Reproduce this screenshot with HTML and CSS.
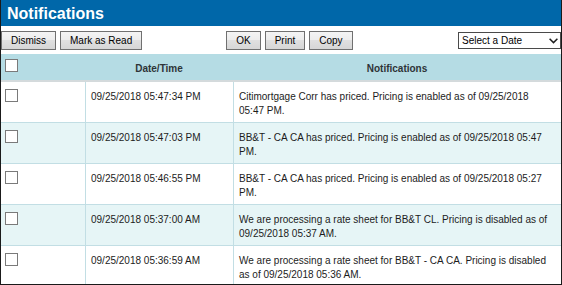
FILE: index.html
```html
<!DOCTYPE html>
<html>
    <head>
        <title>Notifications</title>
        <meta http-equiv="Content-Type" content="text/html; charset=UTF-8">
        <link rel="stylesheet" href="styles.css">
    </head>
    <body>
        <div class="panel">
            <div class="panel-title">Notifications</div>

            <div class="toolbar">
                <div class="btn-group">
                    <button class="btn">Dismiss</button>
                    <button class="btn">Mark as Read</button>
                </div>
                <div class="btn-group actions">
                    <button class="btn">OK</button>
                    <button class="btn">Print</button>
                    <button class="btn">Copy</button>
                </div>
                <div class="date-select">
                    <select>
                        <option>Select a Date</option>
                    </select>
                    <svg class="chevron" width="9" height="6" viewBox="0 0 9 6">
                        <path d="M0.6 0.8 L4.5 4.6 L8.4 0.8" fill="none" stroke="#1e1e1e" stroke-width="1.5"/>
                    </svg>
                </div>
            </div>

            <div class="list-head">
                <div class="cell check"><input type="checkbox" class="box"></div>
                <div class="cell">Date/Time</div>
                <div class="cell">Notifications</div>
            </div>

            <div class="list">
                <div class="row">
                    <div class="cell check"><input type="checkbox" class="box"></div>
                    <div class="cell">09/25/2018 05:47:34 PM</div>
                    <div class="cell">Citimortgage Corr has priced. Pricing is enabled as of 09/25/2018 05:47 PM.</div>
                </div>
                <div class="row alt">
                    <div class="cell check"><input type="checkbox" class="box"></div>
                    <div class="cell">09/25/2018 05:47:03 PM</div>
                    <div class="cell">BB&amp;T - CA CA has priced. Pricing is enabled as of 09/25/2018 05:47 PM.</div>
                </div>
                <div class="row">
                    <div class="cell check"><input type="checkbox" class="box"></div>
                    <div class="cell">09/25/2018 05:46:55 PM</div>
                    <div class="cell">BB&amp;T - CA CA has priced. Pricing is enabled as of 09/25/2018 05:27 PM.</div>
                </div>
                <div class="row alt">
                    <div class="cell check"><input type="checkbox" class="box"></div>
                    <div class="cell">09/25/2018 05:37:00 AM</div>
                    <div class="cell">We are processing a rate sheet for BB&amp;T CL. Pricing is disabled as of 09/25/2018 05:37 AM.</div>
                </div>
                <div class="row">
                    <div class="cell check"><input type="checkbox" class="box"></div>
                    <div class="cell">09/25/2018 05:36:59 AM</div>
                    <div class="cell">We are processing a rate sheet for BB&amp;T - CA CA. Pricing is disabled as of 09/25/2018 05:36 AM.</div>
                </div>
            </div>
        </div>
    </body>
</html>
```

FILE: styles.css
```css
body {
    padding: 0;
    margin: 0;
    font-family: "Liberation Sans", Arial, sans-serif;
    font-size: 10px;
    color: #1c1c1c;
}

.panel {
    width: 562px;
    height: 285px;
    box-sizing: border-box;
    border: 1px solid #1a1a1a;
    border-top: none;
    overflow: hidden;
    background-color: #fff;
}

.panel-title {
    height: 26px;
    padding-left: 6px;
    background-color: #0067a9;
    color: #fff;
    font-size: 16px;
    font-weight: bold;
    line-height: 27px;
}

/* toolbar */

.toolbar {
    display: flex;
    align-items: center;
    height: 28px;
}

.btn-group {
    display: flex;
    gap: 4px;
}

.btn-group.actions {
    margin-left: 84px;
}

.btn {
    height: 19px;
    margin: 0;
    padding: 0 9px;
    border: 1px solid #707070;
    border-radius: 0;
    background: linear-gradient(#f4f4f4, #ececec 50%, #e0e0e0 50%, #d6d6d6);
    font-family: inherit;
    font-size: 10px;
    color: #000;
}

.date-select {
    position: relative;
    margin-left: auto;
}

.date-select select {
    display: block;
    width: 103px;
    height: 17px;
    margin: 0;
    padding: 0 0 0 3px;
    border: 1px solid #4a4a4a;
    border-radius: 0;
    background-color: #fff;
    -webkit-appearance: none;
    appearance: none;
    font-family: inherit;
    font-size: 10px;
    color: #000;
}

.date-select .chevron {
    position: absolute;
    top: 6px;
    right: 3px;
    pointer-events: none;
}

/* list */

.list-head,
.row {
    display: grid;
    grid-template-columns: 84px 148px 1fr;
}

.list-head {
    height: 26px;
    background-color: #b5dce4;
    border-bottom: 2px solid #d4dadc;
    font-weight: bold;
    color: #2e3438;
}

.list-head .cell {
    padding-top: 8px;
    line-height: 14px;
    text-align: center;
}

.list-head .cell.check {
    padding: 5px 4px 0;
}

.row {
    border-bottom: 1px solid #c2dee4;
}

.row.alt {
    background-color: #e6f5f6;
}

.row .cell {
    padding: 8px 5px 4px;
    line-height: 14px;
}

.row .cell + .cell {
    border-left: 1px solid #c2dee4;
}

.row .cell.check {
    padding: 7px 4px 0;
}

.box {
    display: block;
    width: 13px;
    height: 13px;
    margin: 0;
    border: 1px solid #7a7a7a;
    border-radius: 0;
    background-color: #fff;
    -webkit-appearance: none;
    appearance: none;
}
```
